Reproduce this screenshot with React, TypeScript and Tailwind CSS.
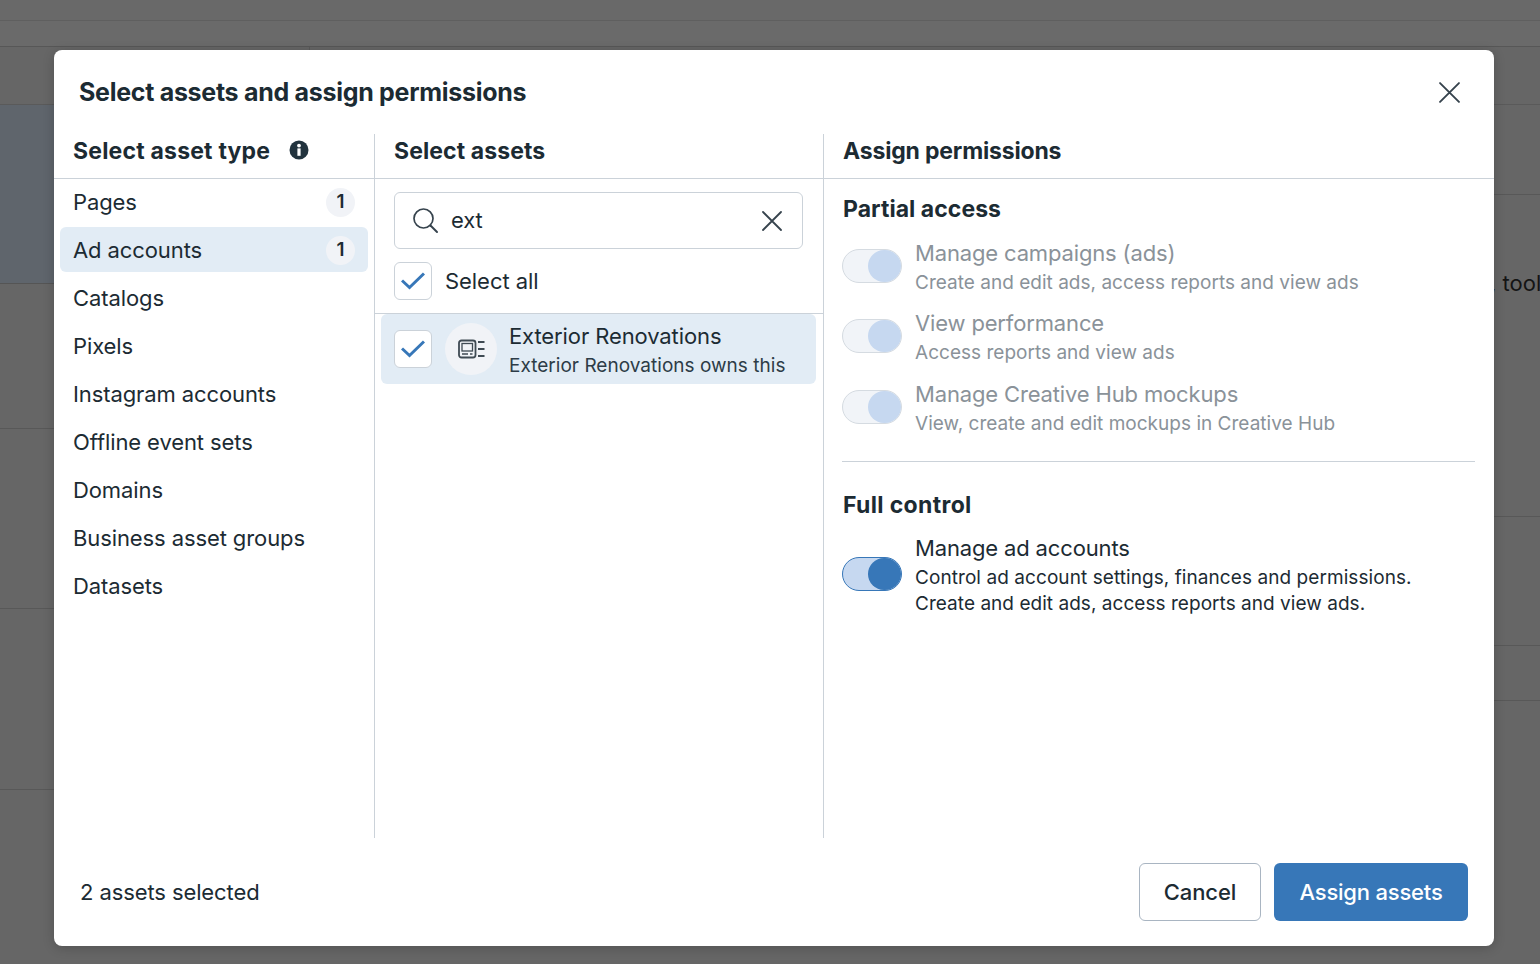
const ASSET_TYPES = [
  { name: 'Pages', count: 1 },
  { name: 'Ad accounts', count: 1, active: true },
  { name: 'Catalogs' },
  { name: 'Pixels' },
  { name: 'Instagram accounts' },
  { name: 'Offline event sets' },
  { name: 'Domains' },
  { name: 'Business asset groups' },
  { name: 'Datasets' },
];

const PARTIAL = [
  { title: 'Manage campaigns (ads)', desc: 'Create and edit ads, access reports and view ads', h: 'h-[70px]' },
  { title: 'View performance', desc: 'Access reports and view ads', h: 'h-[71px]' },
  { title: 'Manage Creative Hub mockups', desc: 'View, create and edit mockups in Creative Hub', h: 'h-[70px]' },
];

function Check() {
  return (
    <span className="flex h-[38px] w-[38px] shrink-0 items-center justify-center rounded-[6px] border border-[#cbd2d9] bg-white">
      <svg width="24" height="24" viewBox="0 0 24 24" fill="none">
        <path d="M1 11.5 8.5 18.5 23 4.5" stroke="#3777b8" strokeWidth="3" />
      </svg>
    </span>
  );
}

function Toggle({ on }: { on?: boolean }) {
  return (
    <span
      className={`flex h-[34px] w-[60px] shrink-0 justify-end rounded-full border ${
        on ? 'border-[#3777b8] bg-[#c6d8f0]' : 'border-[#d5dbe1] bg-[#f1f4f8]'
      }`}
    >
      <span className={`h-full w-[33px] rounded-full ${on ? 'bg-[#3777b8]' : 'bg-[#c6d8f0]'}`} />
    </span>
  );
}

function CloseIcon({ size }: { size: number }) {
  return (
    <svg width={size} height={size} viewBox="0 0 20 20" fill="none">
      <path d="M1 1 19 19M19 1 1 19" stroke="#36434d" strokeWidth="1.8" strokeLinecap="round" />
    </svg>
  );
}

export default function App() {
  return (
    <div className="relative h-[964px] w-[1540px] overflow-hidden bg-[#666666] font-['Inter',sans-serif] text-[#1c2b33]">
      {/* dimmed page behind the dialog */}
      <div className="h-[21px] border-b border-[#5f5f5f] bg-[#696969]" />
      <div className="h-[26px] border-b border-[#575757] bg-[#6a6a6a]" />
      <div className="flex h-[58px] border-b border-[#5a5a5a]">
        <div className="w-[310px] border-r border-[#5a5a5a]" />
      </div>
      <div className="flex">
        <div className="w-[54px]">
          <div className="h-[179px] border-b border-[#555] bg-[#5f656c]" />
          <div className="h-[145px] border-b border-[#585858]" />
          <div className="h-[180px] border-b border-[#585858]" />
          <div className="h-[181px] border-b border-[#585858]" />
        </div>
        <div className="flex-1" />
        <div className="w-[50px]">
          <div className="h-[90px] border-b border-[#585858]" />
          <div className="h-[322px] overflow-hidden whitespace-nowrap border-b border-[#585858] pt-[73px] text-[22px] leading-[30px] text-[#141414]">
            , tool
          </div>
          <div className="h-[129px] border-b border-[#585858]" />
          <div className="h-[55px] border-b border-[#585858]" />
        </div>
      </div>

      <div className="absolute left-[54px] top-[50px] flex h-[896px] w-[1440px] flex-col rounded-[8px] bg-white shadow-[0_2px_12px_rgba(0,0,0,0.2)]">
        <div className="flex h-[84px] shrink-0 items-center justify-between pl-[25px] pr-[34px]">
          <h1 className="text-[25px] font-bold leading-none tracking-[-0.29px]">
            Select assets and assign permissions
          </h1>
          <CloseIcon size={21} />
        </div>

        <div className="flex min-h-0 flex-1">
          {/* asset types */}
          <div className="w-[321px] shrink-0 border-r border-[#cbd2d9]">
            <div className="flex h-[45px] items-center gap-[19px] border-b border-[#cbd2d9] pb-[10px] pl-[19px]">
              <h2 className="text-[23px] font-bold leading-none tracking-[0.2px]">Select asset type</h2>
              <svg width="20" height="20" viewBox="0 0 20 20" className="mb-[2px]">
                <circle cx="10" cy="10" r="9.5" fill="#22333e" />
                <rect x="8.4" y="8.4" width="3.2" height="7.4" fill="#fff" />
                <circle cx="10" cy="5.6" r="1.9" fill="#fff" />
              </svg>
            </div>
            <ul className="flex flex-col gap-[3px] px-[6px]">
              {ASSET_TYPES.map((t) => (
                <li
                  key={t.name}
                  className={`flex h-[45px] items-center justify-between rounded-[6px] pl-[13px] pr-[13px] pt-[2px] text-[22px] tracking-[-0.1px] ${
                    t.active ? 'bg-[#e2ecf5]' : ''
                  }`}
                >
                  <span>{t.name}</span>
                  {t.count && (
                    <span className="mb-[1px] flex h-[29px] w-[29px] items-center justify-center rounded-full bg-[#f1f3f7] text-[19px] font-semibold">
                      {t.count}
                    </span>
                  )}
                </li>
              ))}
            </ul>
          </div>

          {/* assets */}
          <div className="w-[449px] shrink-0 border-r border-[#cbd2d9]">
            <div className="flex h-[45px] items-center border-b border-[#cbd2d9] pb-[10px] pl-[19px]">
              <h2 className="text-[23px] font-bold leading-none tracking-[0.1px]">Select assets</h2>
            </div>
            <div className="px-[19px] pt-[13px]">
              <div className="flex h-[57px] w-[409px] items-center rounded-[6px] border border-[#cbd2d9] pl-[17px] pr-[20px]">
                <svg width="27" height="27" viewBox="0 0 27 27" fill="none">
                  <circle cx="11.5" cy="11.5" r="9.5" stroke="#36434d" strokeWidth="1.7" />
                  <path d="M18.5 18.5 25 25" stroke="#36434d" strokeWidth="2" strokeLinecap="round" />
                </svg>
                <span className="ml-[12px] flex-1 text-[22px] tracking-[-0.1px]">ext</span>
                <CloseIcon size={20} />
              </div>
              <label className="flex h-[64px] items-center gap-[13px]">
                <Check />
                <span className="text-[22px] tracking-[-0.05px]">Select all</span>
              </label>
            </div>
            <div className="border-t border-[#cbd2d9] px-[6px]">
              <div className="flex h-[70px] w-[435px] items-center rounded-[6px] bg-[#e2ecf5] pl-[13px]">
                <Check />
                <span className="ml-[13px] flex h-[52px] w-[52px] shrink-0 items-center justify-center rounded-full bg-[#f1f3f7]">
                  <svg width="27" height="20" viewBox="0 0 27 20" fill="none" stroke="#3f4a53">
                    <rect x="1" y="1.5" width="16.5" height="17" rx="2.5" strokeWidth="1.8" />
                    <rect x="4" y="4.5" width="10.5" height="7.5" strokeWidth="1.3" />
                    <path d="M4 15h6M12 15h2.5" strokeWidth="1.6" />
                    <path d="M20 3h6.5M20 10h6.5M20 17h6.5" strokeWidth="1.8" />
                  </svg>
                </span>
                <div className="ml-[12px] pt-[6px]">
                  <div className="text-[22px] leading-[28px] tracking-[-0.1px]">Exterior Renovations</div>
                  <div className="text-[19px] leading-[32px] tracking-[0.02px] text-[#2d3c47]">
                    Exterior Renovations owns this
                  </div>
                </div>
              </div>
            </div>
          </div>

          {/* permissions */}
          <div className="flex-1">
            <div className="flex h-[45px] items-center border-b border-[#cbd2d9] pb-[10px] pl-[19px]">
              <h2 className="text-[23px] font-bold leading-none tracking-[-0.18px]">Assign permissions</h2>
            </div>
            <div className="pl-[18px] pr-[19px]">
              <h3 className="pl-[1px] pt-[16px] text-[23px] font-bold leading-[28px] tracking-[0.05px]">
                Partial access
              </h3>
              <div className="pb-[11px] pt-[16px]">
                {PARTIAL.map((p) => (
                  <div key={p.title} className={`flex ${p.h} items-start gap-[13px]`}>
                    <div className="pt-[10px]">
                      <Toggle />
                    </div>
                    <div className="text-[#8a9299]">
                      <div className="text-[22px] leading-[28px] tracking-[-0.15px]">{p.title}</div>
                      <div className="text-[19px] leading-[32px] tracking-[0.02px]">{p.desc}</div>
                    </div>
                  </div>
                ))}
              </div>
              <div className="border-t border-[#cbd2d9]" />
              <h3 className="pl-[1px] pt-[29px] text-[23px] font-bold leading-[28px] tracking-[0.35px]">
                Full control
              </h3>
              <div className="flex items-start gap-[13px] pt-[15px]">
                <div className="pt-[23px]">
                  <Toggle on />
                </div>
                <div>
                  <div className="text-[22px] leading-[28px] tracking-[-0.15px]">Manage ad accounts</div>
                  <div className="text-[19px] leading-[32px] tracking-[0.07px]">
                    Control ad account settings, finances and permissions.
                  </div>
                  <div className="text-[19px] leading-[20px] tracking-[0.04px]">
                    Create and edit ads, access reports and view ads.
                  </div>
                </div>
              </div>
            </div>
          </div>
        </div>

        <div className="flex h-[108px] shrink-0 items-center justify-between pl-[26px] pr-[26px]">
          <span className="text-[22px] tracking-[-0.1px]">2 assets selected</span>
          <div className="flex gap-[13px]">
            <button className="h-[58px] w-[122px] rounded-[6px] border border-[#a9b5c2] bg-white text-[22px] font-medium tracking-[-0.1px]">
              Cancel
            </button>
            <button className="h-[58px] w-[194px] rounded-[6px] bg-[#3777b8] text-[22px] font-medium tracking-[-0.2px] text-white">
              Assign assets
            </button>
          </div>
        </div>
      </div>
    </div>
  );
}
